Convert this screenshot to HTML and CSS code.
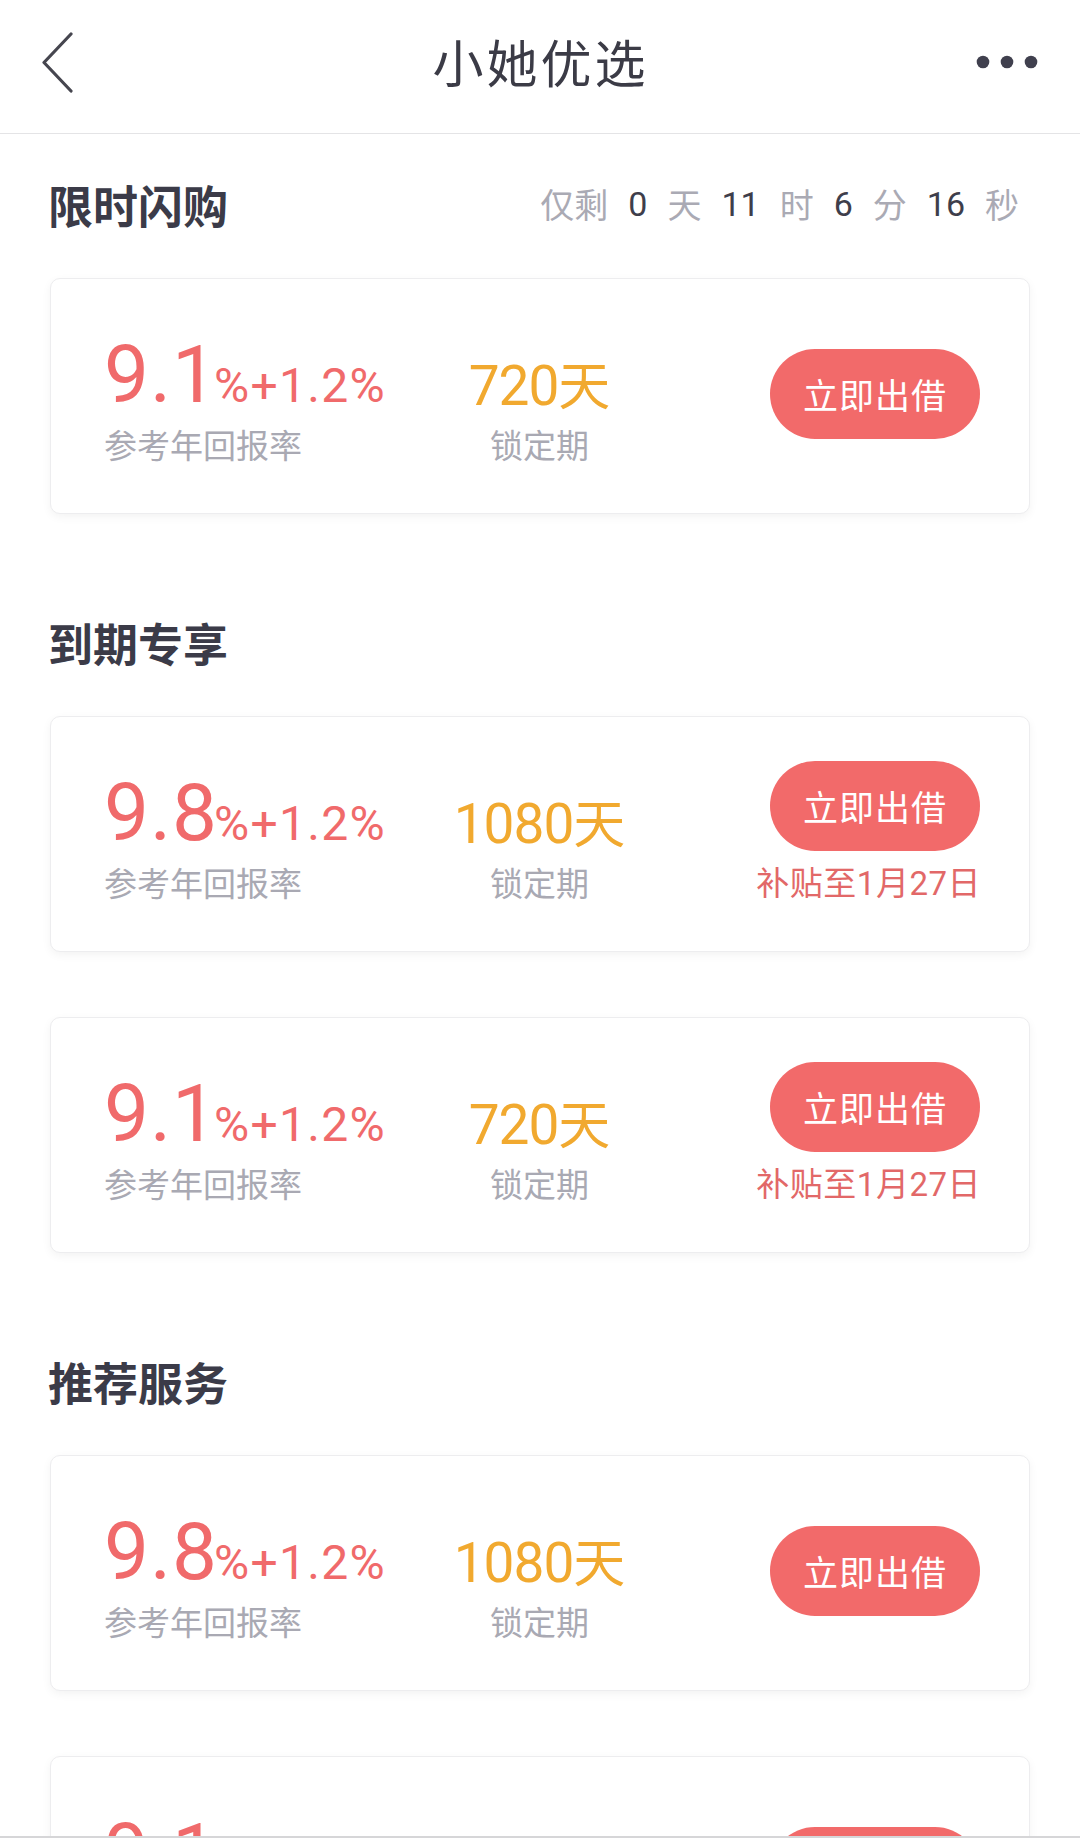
FILE: index.html
```html
<!DOCTYPE html>
<html lang="zh-CN">
<head>
<meta charset="utf-8">
<title>小她优选</title>
<link rel="stylesheet" href="styles.css">
</head>
<body>
<header class="nav">
  <div class="nav-side">
    <svg class="nav-back" width="34" height="62" viewBox="0 0 34 62"><path d="M30 2 L3 30.5 L30 59" fill="none" stroke="#46464f" stroke-width="3.2" stroke-linecap="round" stroke-linejoin="round"/></svg>
  </div>
  <h1 class="nav-title">小她优选</h1>
  <div class="nav-side nav-right">
    <svg class="nav-more" width="62" height="14" viewBox="0 0 62 14"><circle cx="7" cy="7" r="6.3" fill="#40404e"/><circle cx="31" cy="7" r="6.3" fill="#40404e"/><circle cx="55" cy="7" r="6.3" fill="#40404e"/></svg>
  </div>
</header>

<main class="page">
  <section class="section">
    <div class="section-head">
      <h2 class="section-title">限时闪购</h2>
      <div class="countdown">
        <span class="cd-label">仅剩</span><span class="cd-num">0</span><span class="cd-label">天</span><span class="cd-num">11</span><span class="cd-label">时</span><span class="cd-num">6</span><span class="cd-label">分</span><span class="cd-num">16</span><span class="cd-label">秒</span>
      </div>
    </div>
    <div class="card-list">
      <div class="card">
        <div class="col-rate">
          <div class="rate-value"><span class="rate-main">9.1</span><span class="rate-extra">%+1.2%</span></div>
          <div class="caption">参考年回报率</div>
        </div>
        <div class="col-term">
          <div class="term-value">720<span class="term-unit">天</span></div>
          <div class="caption">锁定期</div>
        </div>
        <div class="col-action">
          <button class="btn">立即出借</button>
        </div>
      </div>
    </div>
  </section>

  <section class="section">
    <div class="section-head">
      <h2 class="section-title">到期专享</h2>
    </div>
    <div class="card-list">
      <div class="card">
        <div class="col-rate">
          <div class="rate-value"><span class="rate-main">9.8</span><span class="rate-extra">%+1.2%</span></div>
          <div class="caption">参考年回报率</div>
        </div>
        <div class="col-term">
          <div class="term-value">1080<span class="term-unit">天</span></div>
          <div class="caption">锁定期</div>
        </div>
        <div class="col-action">
          <button class="btn">立即出借</button>
          <div class="subsidy">补贴至1月27日</div>
        </div>
      </div>
      <div class="card">
        <div class="col-rate">
          <div class="rate-value"><span class="rate-main">9.1</span><span class="rate-extra">%+1.2%</span></div>
          <div class="caption">参考年回报率</div>
        </div>
        <div class="col-term">
          <div class="term-value">720<span class="term-unit">天</span></div>
          <div class="caption">锁定期</div>
        </div>
        <div class="col-action">
          <button class="btn">立即出借</button>
          <div class="subsidy">补贴至1月27日</div>
        </div>
      </div>
    </div>
  </section>

  <section class="section">
    <div class="section-head">
      <h2 class="section-title">推荐服务</h2>
    </div>
    <div class="card-list">
      <div class="card">
        <div class="col-rate">
          <div class="rate-value"><span class="rate-main">9.8</span><span class="rate-extra">%+1.2%</span></div>
          <div class="caption">参考年回报率</div>
        </div>
        <div class="col-term">
          <div class="term-value">1080<span class="term-unit">天</span></div>
          <div class="caption">锁定期</div>
        </div>
        <div class="col-action">
          <button class="btn">立即出借</button>
        </div>
      </div>
      <div class="card">
        <div class="col-rate">
          <div class="rate-value"><span class="rate-main">9.1</span><span class="rate-extra">%+1.2%</span></div>
          <div class="caption">参考年回报率</div>
        </div>
        <div class="col-term">
          <div class="term-value">720<span class="term-unit">天</span></div>
          <div class="caption">锁定期</div>
        </div>
        <div class="col-action">
          <button class="btn">立即出借</button>
        </div>
      </div>
    </div>
  </section>
</main>
<div class="bottom-edge"></div>
</body>
</html>
```

FILE: styles.css
```css
* { box-sizing: border-box; }

html, body {
  margin: 0;
  padding: 0;
  background: #ffffff;
}

body {
  font-family: "Noto Sans CJK SC", "Noto Sans", sans-serif;
  color: #3c3c48;
  overflow: hidden;
}

/* ---------- nav bar ---------- */
.nav {
  height: 134px;
  border-bottom: 1px solid #e4e4e6;
  display: grid;
  grid-template-columns: 1fr auto 1fr;
  align-items: center;
  padding: 0 42px 0 41px;
}

.nav-side {
  display: flex;
  align-items: center;
}

.nav-right {
  justify-content: flex-end;
}

.nav-back { display: block; margin-top: -8px; }
.nav-more { display: block; margin-top: -9px; }

.nav-title {
  margin: -12px 0 0 2px;
  font-size: 51px;
  font-weight: 400;
  letter-spacing: 3px;
  line-height: 60px;
  color: #3b3b46;
}

/* ---------- page ---------- */
.page {
  padding: 41px 50px 0;
}

.section + .section {
  margin-top: 99px;
}

.section-head {
  height: 60px;
  display: flex;
  align-items: center;
  justify-content: space-between;
  margin-bottom: 43px;
}

.section-title {
  margin: 0 0 0 -2px;
  font-size: 45px;
  line-height: 60px;
  font-weight: 700;
  color: #3b3b48;
}

.countdown {
  display: flex;
  align-items: center;
  gap: 20px;
  padding-right: 11px;
  font-size: 34px;
  line-height: 60px;
  margin-top: -2px;
}

.cd-label {
  color: #aaaab4;
}

.cd-num {
  font-family: Roboto, "Noto Sans", sans-serif;
  color: #3e3e4b;
}

/* ---------- cards ---------- */
.card-list {
  display: flex;
  flex-direction: column;
  gap: 65px;
}

.card {
  height: 236px;
  border: 1px solid #ededef;
  border-radius: 10px;
  background: #fff;
  box-shadow: 0 3px 10px rgba(0, 0, 0, 0.05);
  display: grid;
  grid-template-columns: 1fr auto 1fr;
  padding: 0 49px 0 53px;
}

.col-rate {
  align-self: start;
  padding-top: 56px;
}

.rate-value {
  line-height: 80px;
  height: 80px;
  color: #f06a6b;
  font-family: Roboto, "Noto Sans", sans-serif;
  white-space: nowrap;
}

.rate-main {
  font-size: 80px;
  letter-spacing: 1px;
  margin-right: -4px;
}

.rate-extra {
  font-size: 48px;
  line-height: 48px;
  letter-spacing: 1.3px;
}

.caption {
  font-size: 33px;
  line-height: 40px;
  color: #a9a9b3;
  margin-top: 9px;
  white-space: nowrap;
}

.col-term {
  align-self: start;
  padding-top: 64px;
  margin-right: 5px;
  text-align: center;
}

.col-term .caption {
  margin-top: 1px;
}

.term-value {
  height: 80px;
  line-height: 80px;
  font-family: Roboto, "Noto Sans CJK SC", sans-serif;
  font-size: 55px;
  letter-spacing: -1px;
  color: #f1a92f;
  white-space: nowrap;
}

.term-unit {
  font-family: "Noto Sans CJK SC", sans-serif;
  font-size: 52px;
  letter-spacing: 0;
}

.col-action {
  align-self: center;
  justify-self: end;
  display: flex;
  flex-direction: column;
  align-items: flex-end;
  margin-top: -4px;
}

.btn {
  width: 210px;
  height: 90px;
  border: none;
  border-radius: 45px;
  background: #f26a6a;
  color: #ffffff;
  font-family: "Noto Sans CJK SC", sans-serif;
  font-size: 35px;
  letter-spacing: 1px;
  padding: 0;
  line-height: 90px;
}

.subsidy {
  margin-top: 13px;
  margin-right: -1px;
  font-size: 33px;
  line-height: 40px;
  color: #e26868;
  font-family: Roboto, "Noto Sans CJK SC", sans-serif;
  white-space: nowrap;
  letter-spacing: 0.5px;
}

.bottom-edge {
  position: fixed;
  left: 0;
  right: 0;
  bottom: 0;
  height: 2px;
  background: #d6d6d8;
}
```
